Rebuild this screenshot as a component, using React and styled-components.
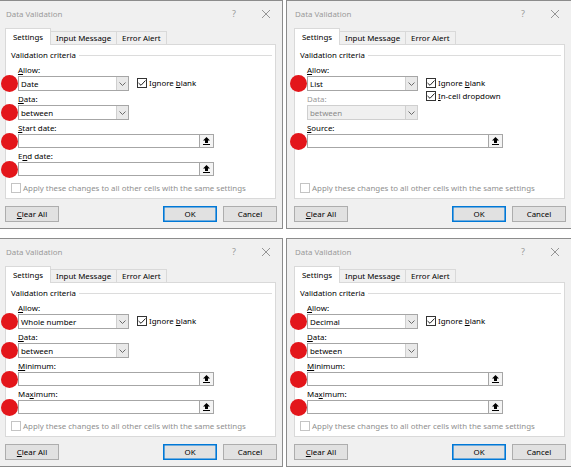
import React from "react";
import styled, { createGlobalStyle } from "styled-components";

const GlobalStyle = createGlobalStyle`
  body {
    margin: 0;
    background: #fff;
    font-family: "Segoe UI", "Noto Sans", sans-serif;
  }
`;

const Sheet = styled.div`
  width: 571px;
  height: 467px;
  overflow: hidden;
  background: #fff;
`;

// the captures are cropped a little on the left, hence the negative margin
const Grid = styled.div`
  display: grid;
  grid-template-columns: 286px 286px;
  grid-template-rows: 229px 229px;
  column-gap: 3px;
  row-gap: 9px;
  margin-left: -3px;
`;

const Dialog = styled.div`
  box-sizing: border-box;
  border: 1px solid #8c8c8c;
  background: #f0f0f0;
  display: flex;
  flex-direction: column;
  font-size: 7.9px;
  color: #000;
`;

const TitleBar = styled.div`
  height: 25px;
  display: flex;
  align-items: center;
  padding: 0 12px 0 8px;
  color: #9a9a9a;
`;

const Help = styled.span`
  margin-left: auto;
  font-size: 9px;
`;

const Close = styled.span`
  margin-left: 26px;
  display: flex;
`;

const TabRow = styled.div`
  height: 18px;
  display: flex;
  align-items: flex-end;
  padding-left: 8px;
`;

const Tab = styled.div`
  position: relative;
  z-index: ${(p) => (p.$active ? 1 : 0)};
  box-sizing: border-box;
  height: ${(p) => (p.$active ? 17 : 13)}px;
  margin-bottom: ${(p) => (p.$active ? -1 : 0)}px;
  margin-left: -1px;
  padding: 0 ${(p) => (p.$active ? 7 : 5)}px;
  display: flex;
  align-items: center;
  border: 1px solid #d9d9d9;
  border-bottom: none;
  background: ${(p) => (p.$active ? "#fff" : "#f0f0f0")};
`;

const Panel = styled.div`
  box-sizing: border-box;
  height: 155px;
  margin: 0 6px 0 7px;
  padding: 4px 3px 4px 5px;
  border: 1px solid #d9d9d9;
  background: #fff;
  display: flex;
  flex-direction: column;
`;

const GroupHeader = styled.div`
  height: 12px;
  display: flex;
  align-items: center;
  gap: 3px;
  &::after {
    content: "";
    flex: 1;
    height: 1px;
    background: #dcdcdc;
  }
`;

const Fields = styled.div`
  margin: 3px 0 0 7px;
  display: flex;
  flex-direction: column;
  gap: 2px;
`;

const FieldLabel = styled.div`
  height: 12px;
  line-height: 12px;
  color: ${(p) => (p.$disabled ? "#9a9a9a" : "#000")};
`;

const ControlRow = styled.div`
  height: ${(p) => p.$h}px;
  display: flex;
  align-items: flex-start;
`;

const Control = styled.div`
  position: relative;
  box-sizing: border-box;
  width: ${(p) => p.$w}px;
  height: 100%;
  display: flex;
  border: 1px solid ${(p) => (p.$disabled ? "#cfcfcf" : "#a6a6a6")};
  background: ${(p) => (p.$disabled ? "#f0f0f0" : "#fff")};
  color: ${(p) => (p.$disabled ? "#8a8a8a" : "#000")};
`;

const Value = styled.span`
  flex: 1;
  padding-left: 2px;
  display: flex;
  align-items: center;
`;

const ArrowBox = styled.span`
  width: 11px;
  display: flex;
  align-items: center;
  justify-content: center;
  border-left: 1px solid #cfcfcf;
  background: #e9e9e9;
`;

const RefButton = styled.span`
  width: 13px;
  display: flex;
  align-items: center;
  justify-content: center;
  border-left: 1px solid #a6a6a6;
  background: #f4f4f4;
`;

const Marker = styled.span`
  position: absolute;
  left: -18px;
  top: 50%;
  width: 17px;
  height: 17px;
  margin-top: -8.5px;
  border-radius: 50%;
  background: #e3161b;
`;

const Checks = styled.div`
  margin-left: 8px;
  display: flex;
  flex-direction: column;
`;

const CheckRow = styled.label`
  height: 13px;
  display: flex;
  align-items: center;
  gap: 2px;
  white-space: nowrap;
  color: ${(p) => (p.$disabled ? "#8f8f8f" : "#000")};
`;

const Box = styled.span`
  box-sizing: border-box;
  width: 10px;
  height: 10px;
  display: flex;
  align-items: center;
  justify-content: center;
  border: 1px solid ${(p) => (p.$disabled ? "#c4c4c4" : "#333")};
  background: #fff;
`;

const ApplyRow = styled(CheckRow)`
  margin-top: auto;
  height: 12px;
`;

const Footer = styled.div`
  display: flex;
  gap: 6px;
  padding: 7px 5px 0 7px;
`;

const Button = styled.button`
  box-sizing: border-box;
  width: 54px;
  height: 16px;
  padding: 0;
  font: inherit;
  color: #000;
  background: #e1e1e1;
  border: 1px solid ${(p) => (p.$primary ? "#0078d7" : "#adadad")};
  box-shadow: ${(p) => (p.$primary ? "inset 0 0 0 0.6px #0078d7" : "none")};
  &:first-child {
    margin-right: auto;
  }
`;

const Key = styled.span`
  text-decoration: underline;
  text-underline-offset: 1px;
`;

const Accel = ({ text, at }) => (
  <span>
    {text.slice(0, at)}
    <Key>{text[at]}</Key>
    {text.slice(at + 1)}
  </span>
);

const Chevron = () => (
  <svg width="7" height="4" viewBox="0 0 7 4">
    <polyline points="0.5,0.5 3.5,3.5 6.5,0.5" fill="none" stroke="#6a6a6a" strokeWidth="1" />
  </svg>
);

const CollapseIcon = () => (
  <svg width="7" height="8" viewBox="0 0 7 8">
    <path d="M3.5 0 L7 3.5 H5 V6 H2 V3.5 H0 Z" fill="#000" />
    <rect x="0" y="7" width="7" height="1" fill="#000" />
  </svg>
);

const Tick = () => (
  <svg width="8" height="6" viewBox="0 0 8 6">
    <polyline points="0.5,3 3,5.3 7.5,0.5" fill="none" stroke="#222" strokeWidth="1" />
  </svg>
);

const CloseIcon = () => (
  <svg width="8" height="8" viewBox="0 0 8 8">
    <path d="M0 0 L8 8 M8 0 L0 8" stroke="#8a8a8a" strokeWidth="0.9" />
  </svg>
);

const Select = ({ value, marked, disabled }) => (
  <Control $w={111} $disabled={disabled}>
    {marked && <Marker />}
    <Value>{value}</Value>
    <ArrowBox>
      <Chevron />
    </ArrowBox>
  </Control>
);

const RefInput = () => (
  <Control $w={196}>
    <Marker />
    <Value />
    <RefButton>
      <CollapseIcon />
    </RefButton>
  </Control>
);

const dialogs = [
  {
    allow: "Date",
    checks: [{ text: "Ignore blank", at: 7 }],
    refs: [
      { text: "Start date:", at: 0 },
      { text: "End date:", at: 1 },
    ],
  },
  {
    allow: "List",
    checks: [
      { text: "Ignore blank", at: 7 },
      { text: "In-cell dropdown", at: 0 },
    ],
    dataDisabled: true,
    refs: [{ text: "Source:", at: 0 }],
  },
  {
    allow: "Whole number",
    checks: [{ text: "Ignore blank", at: 7 }],
    refs: [
      { text: "Minimum:", at: 0 },
      { text: "Maximum:", at: 2 },
    ],
  },
  {
    allow: "Decimal",
    checks: [{ text: "Ignore blank", at: 7 }],
    refs: [
      { text: "Minimum:", at: 0 },
      { text: "Maximum:", at: 2 },
    ],
  },
];

const ValidationDialog = ({ allow, checks, dataDisabled, refs }) => (
  <Dialog>
    <TitleBar>
      <span>Data Validation</span>
      <Help>?</Help>
      <Close>
        <CloseIcon />
      </Close>
    </TitleBar>
    <TabRow>
      <Tab $active>Settings</Tab>
      <Tab>Input Message</Tab>
      <Tab>Error Alert</Tab>
    </TabRow>
    <Panel>
      <GroupHeader>Validation criteria</GroupHeader>
      <Fields>
        <div>
          <FieldLabel>
            <Accel text="Allow:" at={0} />
          </FieldLabel>
          <ControlRow $h={15}>
            <Select value={allow} marked />
            <Checks>
              {checks.map((c) => (
                <CheckRow key={c.text}>
                  <Box>
                    <Tick />
                  </Box>
                  <Accel text={c.text} at={c.at} />
                </CheckRow>
              ))}
            </Checks>
          </ControlRow>
        </div>
        <div>
          <FieldLabel $disabled={dataDisabled}>
            {dataDisabled ? "Data:" : <Accel text="Data:" at={0} />}
          </FieldLabel>
          <ControlRow $h={15}>
            <Select value="between" marked={!dataDisabled} disabled={dataDisabled} />
          </ControlRow>
        </div>
        {refs.map((r) => (
          <div key={r.text}>
            <FieldLabel>
              <Accel text={r.text} at={r.at} />
            </FieldLabel>
            <ControlRow $h={14}>
              <RefInput />
            </ControlRow>
          </div>
        ))}
      </Fields>
      <ApplyRow $disabled>
        <Box $disabled />
        <span>Apply these changes to all other cells with the same settings</span>
      </ApplyRow>
    </Panel>
    <Footer>
      <Button>
        <Accel text="Clear All" at={0} />
      </Button>
      <Button $primary>OK</Button>
      <Button>Cancel</Button>
    </Footer>
  </Dialog>
);

export default function App() {
  return (
    <Sheet>
      <GlobalStyle />
      <Grid>
        {dialogs.map((d) => (
          <ValidationDialog key={d.allow} {...d} />
        ))}
      </Grid>
    </Sheet>
  );
}
